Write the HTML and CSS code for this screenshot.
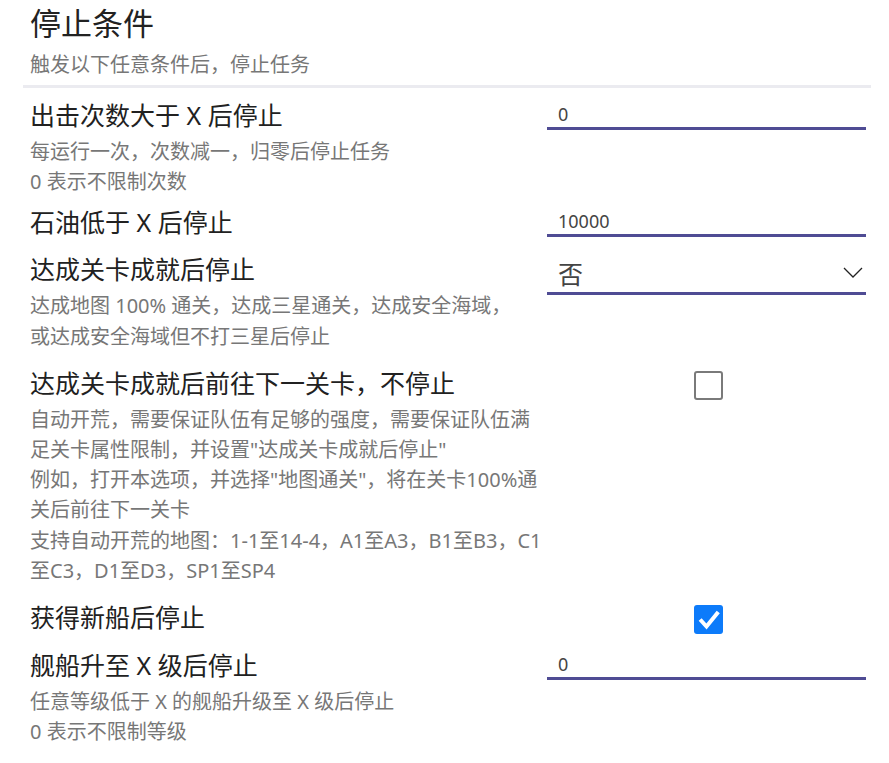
FILE: index.html
```html
<!DOCTYPE html>
<html lang="zh-CN">
<head>
<meta charset="utf-8">
<title>停止条件</title>
<link rel="stylesheet" href="styles.css">
</head>
<body>
<div class="page">
  <h1 class="title">停止条件</h1>
  <p class="subtitle">触发以下任意条件后，停止任务</p>
  <div class="divider"></div>

  <div class="rows">
    <div class="row">
      <div class="info">
        <div class="label">出击次数大于 X 后停止</div>
        <p class="desc">每运行一次，次数减一，归零后停止任务<br>0 表示不限制次数</p>
      </div>
      <input class="field" type="text" value="0">
    </div>

    <div class="row row-tight">
      <div class="info">
        <div class="label">石油低于 X 后停止</div>
      </div>
      <input class="field" type="text" value="10000">
    </div>

    <div class="row row-mid">
      <div class="info">
        <div class="label">达成关卡成就后停止</div>
        <p class="desc">达成地图 100% 通关，达成三星通关，达成安全海域，<br>或达成安全海域但不打三星后停止</p>
      </div>
      <div class="select">
        <span class="select-value">否</span>
        <svg class="chevron" width="20" height="11" viewBox="0 0 20 11"><polyline points="1,1 10,10 19,1" fill="none" stroke="#222" stroke-width="1.3"/></svg>
      </div>
    </div>

    <div class="row">
      <div class="info">
        <div class="label">达成关卡成就后前往下一关卡，不停止</div>
        <p class="desc">自动开荒，需要保证队伍有足够的强度，需要保证队伍满<br>足关卡属性限制，并设置"达成关卡成就后停止"<br>例如，打开本选项，并选择"地图通关"，将在关卡100%通<br>关后前往下一关卡<br>支持自动开荒的地图：1-1至14-4，A1至A3，B1至B3，C1<br>至C3，D1至D3，SP1至SP4</p>
      </div>
      <span class="check"></span>
    </div>

    <div class="row">
      <div class="info">
        <div class="label">获得新船后停止</div>
      </div>
      <span class="check is-checked">
        <svg width="29" height="29" viewBox="0 0 29 29"><polyline points="7.5,16 12.5,21.5 23,8.5" fill="none" stroke="#fff" stroke-width="4" stroke-linejoin="miter" stroke-linecap="square"/></svg>
      </span>
    </div>

    <div class="row">
      <div class="info">
        <div class="label">舰船升至 X 级后停止</div>
        <p class="desc">任意等级低于 X 的舰船升级至 X 级后停止<br>0 表示不限制等级</p>
      </div>
      <input class="field" type="text" value="0">
    </div>
  </div>
</div>
</body>
</html>
```

FILE: styles.css
```css
html, body {
  margin: 0;
  padding: 0;
  background: #ffffff;
}

body {
  font-family: "Noto Sans", "Noto Sans CJK SC", sans-serif;
  color: #212121;
}

.page {
  padding: 3px 18px 0 23px;
}

.title {
  margin: 0;
  padding-left: 7px;
  font-size: 31px;
  line-height: 40px;
  font-weight: normal;
  color: #222222;
}

.subtitle {
  margin: 7px 0 0;
  padding-left: 7px;
  font-size: 20px;
  line-height: 30px;
  color: #777777;
}

.divider {
  margin-top: 5px;
  height: 3px;
  background: #ebebf0;
}

.rows {
  margin-top: 10px;
  padding: 0 5px 0 7px;
}

.row {
  display: grid;
  grid-template-columns: 1fr 319px;
  align-items: start;
}

.row + .row {
  margin-top: 14px;
}

.row.row-tight {
  margin-top: 8px;
}

.row.row-mid {
  margin-top: 13px;
}

.info {
  min-width: 0;
}

.label {
  font-size: 25px;
  line-height: 34px;
  color: #212121;
  white-space: nowrap;
}

.desc {
  margin: 5px 0 0;
  font-size: 20px;
  line-height: 30.2px;
  color: #777777;
  white-space: nowrap;
}

.field {
  box-sizing: border-box;
  width: 100%;
  height: 32px;
  margin: 0;
  padding: 3px 11px 0;
  border: none;
  border-bottom: 3px solid #4f4c94;
  border-radius: 0;
  background: transparent;
  font-family: "Noto Sans", "Noto Sans CJK SC", sans-serif;
  font-size: 18px;
  color: #444444;
  outline: none;
}

.select {
  box-sizing: border-box;
  height: 43px;
  padding: 3px 3px 0 11px;
  border-bottom: 3px solid #4f4c94;
  display: flex;
  align-items: center;
  justify-content: space-between;
}

.select-value {
  font-size: 25px;
  line-height: 34px;
  color: #444444;
}

.chevron {
  display: block;
  margin-top: -3px;
}

.check {
  box-sizing: border-box;
  justify-self: center;
  margin: 5px 0 0 4px;
  width: 29px;
  height: 29px;
  border: 2px solid #7a7a7a;
  border-radius: 3px;
  background: #ffffff;
}

.check.is-checked {
  border: none;
  background: #0d7bfa;
}

.check svg {
  display: block;
}
```
